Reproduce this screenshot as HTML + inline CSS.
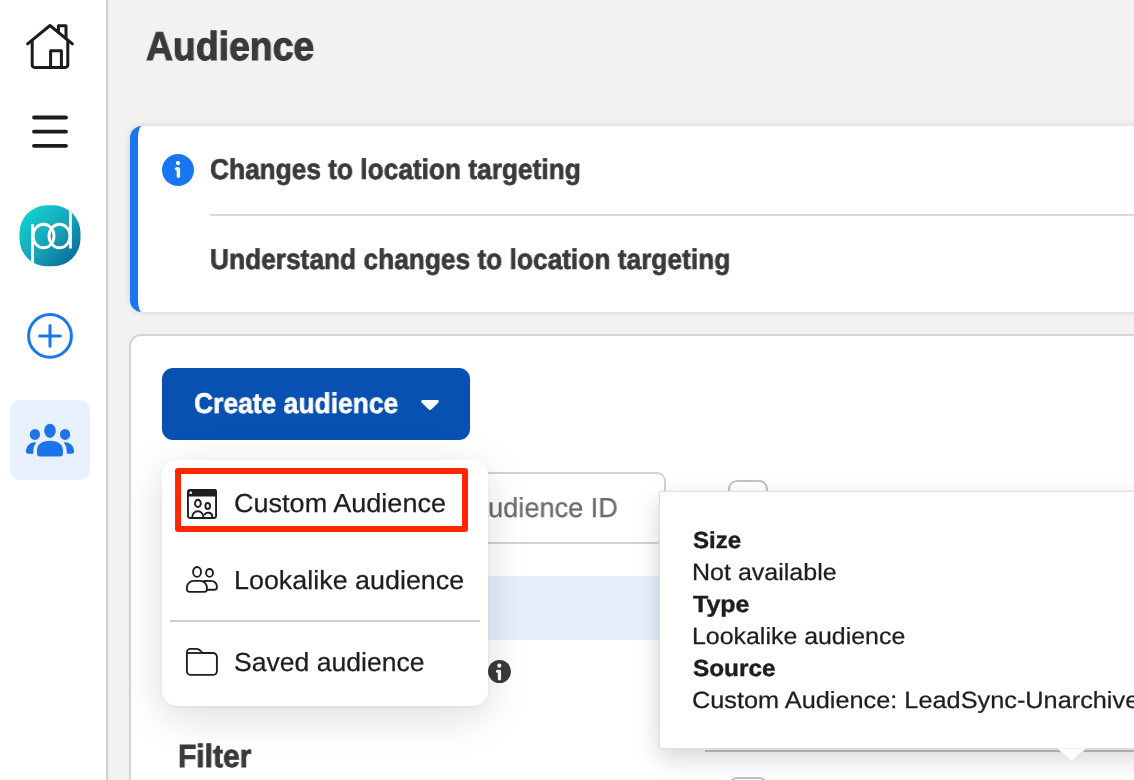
<!DOCTYPE html>
<html lang="en">
<head>
<meta charset="utf-8">
<title>Audience</title>
<style>
html,body{margin:0;padding:0}
body{width:1134px;height:780px;overflow:hidden;position:relative;background:#f2f2f2;font-family:"Liberation Sans",sans-serif}
.abs{position:absolute}
.t{position:absolute;white-space:nowrap;line-height:1;transform-origin:0 0;margin:0;will-change:transform;text-rendering:geometricPrecision}
#sidebar{left:0;top:0;width:106px;height:780px;background:#fff;border-right:2px solid #d2d2d2;box-shadow:1px 0 2px rgba(0,0,0,.04)}
#tile{left:10px;top:400px;width:80px;height:80px;border-radius:10px;background:#e9f1fe}
#alert{left:130px;top:125.5px;width:1100px;height:186.5px;box-sizing:border-box;background:#fff;border-left:8px solid #1876f2;border-radius:12px;box-shadow:0 0 6px rgba(0,0,0,.14)}
#alertline{left:210px;top:214px;width:940px;height:2px;background:#dadada}
#card{left:129px;top:334px;width:1100px;height:600px;box-sizing:border-box;background:#fff;border:2px solid #d4d4d4;border-radius:12px}
#btn{left:162px;top:368px;width:308px;height:72px;border-radius:11px;background:#0950b3}
#search{left:300px;top:472px;width:366px;height:72px;box-sizing:border-box;border:2px solid #d3d3d3;border-radius:9px;background:#fff}
#rowhl{left:200px;top:576px;width:560px;height:63.5px;background:#e8effc}
#tline{left:705px;top:750px;width:500px;height:2px;background:#c6c6c6}
.cb{width:40px;height:40px;box-sizing:border-box;border:2px solid #bec3c9;border-radius:9px;background:#fff}
#menu{left:162px;top:460px;width:326px;height:246px;border-radius:15px;background:#fff;box-shadow:0 10px 44px rgba(0,0,0,.14),0 1px 4px rgba(0,0,0,.06)}
#red{left:174.6px;top:468px;width:293.2px;height:64px;box-sizing:border-box;border:6px solid #ff2600;border-radius:3px}
#mdiv{left:170px;top:620px;width:310px;height:2px;background:#ccd0d5}
#tip{left:659px;top:490.5px;width:600px;height:258.5px;box-sizing:border-box;background:#fff;border:1px solid #e0e0e0;border-radius:3px;box-shadow:0 9px 24px rgba(0,0,0,.17),0 0 2px rgba(0,0,0,.08)}
#tiparrow{left:1054px;top:746px}
#t_title{-webkit-text-stroke:1.1px #3a3a3a;left:145.6px;top:26.8px;font-size:40.26px;font-weight:700;color:#3a3a3a;transform:scaleX(0.9284)}
#t_a1{-webkit-text-stroke:0.7px #3a3a3a;left:210.2px;top:155.8px;font-size:28.63px;font-weight:700;color:#3a3a3a;transform:scaleX(0.9179)}
#t_a2{-webkit-text-stroke:0.7px #3a3a3a;left:210.2px;top:245.8px;font-size:28.63px;font-weight:700;color:#3a3a3a;transform:scaleX(0.9189)}
#t_btn{-webkit-text-stroke:0.6px #ffffff;left:194.4px;top:390.2px;font-size:28.49px;font-weight:700;color:#ffffff;transform:scaleX(0.9280)}
#t_m1{-webkit-text-stroke:0.25px #1c1e21;left:234.1px;top:490.1px;font-size:26.09px;font-weight:400;color:#1c1e21;transform:scaleX(1.0373)}
#t_m2{-webkit-text-stroke:0.25px #1c1e21;left:233.5px;top:567.2px;font-size:26.09px;font-weight:400;color:#1c1e21;transform:scaleX(1.0311)}
#t_m3{-webkit-text-stroke:0.25px #1c1e21;left:234.1px;top:649.0px;font-size:26.09px;font-weight:400;color:#1c1e21;transform:scaleX(1.0189)}
#t_filter{-webkit-text-stroke:0.8px #3a3a3a;left:177.8px;top:739.7px;font-size:32.12px;font-weight:700;color:#3a3a3a;transform:scaleX(0.9337)}
#t_tt1{-webkit-text-stroke:0.4px #1c1e21;left:693.2px;top:528.8px;font-size:23.26px;font-weight:700;color:#1c1e21;transform:scaleX(1.0367)}
#t_tt2{-webkit-text-stroke:0.25px #1c1e21;left:692.1px;top:560.8px;font-size:23.47px;font-weight:400;color:#1c1e21;transform:scaleX(1.0663)}
#t_tt3{-webkit-text-stroke:0.4px #1c1e21;left:693.2px;top:592.9px;font-size:23.26px;font-weight:700;color:#1c1e21;transform:scaleX(1.0759)}
#t_tt4{-webkit-text-stroke:0.25px #1c1e21;left:692.1px;top:624.7px;font-size:23.47px;font-weight:400;color:#1c1e21;transform:scaleX(1.0613)}
#t_tt5{-webkit-text-stroke:0.4px #1c1e21;left:693.2px;top:656.8px;font-size:23.26px;font-weight:700;color:#1c1e21;transform:scaleX(1.0470)}
#t_search{-webkit-text-stroke:0.3px #6b6b6b;left:236.0px;top:494.0px;font-size:27.47px;font-weight:400;color:#6b6b6b;transform:scaleX(0.9885)}
#t_tt6{-webkit-text-stroke:0.25px #1c1e21;left:691.9px;top:688.7px;font-size:23.47px;font-weight:400;color:#1c1e21;transform:scaleX(1.0780)}
</style>
</head>
<body>
<!-- main content -->
<h1 class="t" id="t_title">Audience</h1>

<div class="abs" id="alert"></div>
<svg class="abs" style="left:162px;top:153.900px" width="32" height="32" viewBox="0 0 32 32"><circle cx="16" cy="16" r="16" fill="#1876f2"/><circle cx="16" cy="9.100" r="2.150" fill="#fff"/><path d="M14.400 13.200h2.200a1.500 1.500 0 0 1 1.500 1.500v7.600a1.700 1.700 0 0 1-3.400 0v-6h-.3a1.550 1.550 0 0 1 0-3.100z" fill="#fff"/></svg>
<div class="t" id="t_a1">Changes to location targeting</div>
<div class="abs" id="alertline"></div>
<div class="t" id="t_a2">Understand changes to location targeting</div>

<div class="abs" id="card"></div>
<div class="abs" id="btn"></div>
<div class="t" id="t_btn">Create audience</div>
<svg class="abs" style="left:420px;top:397.500px" width="20" height="14" viewBox="0 0 20 14"><path d="M2.600 2h14.800a1.400 1.400 0 0 1 1 2.400l-6.600 6.600a2.500 2.500 0 0 1-3.600 0l-6.600-6.600a1.400 1.400 0 0 1 1-2.400z" fill="#fff"/></svg>

<div class="abs" id="search"></div>
<div class="t" id="t_search">Search by name or audience ID</div>
<div class="abs" id="rowhl"></div>
<svg class="abs" style="left:487.900px;top:660.200px" width="23" height="23" viewBox="0 0 23 23"><circle cx="11.500" cy="11.500" r="11.500" fill="#3a3a3a"/><circle cx="11.300" cy="5.700" r="2.100" fill="#fff"/><path d="M9.400 9.800h2.200a1.500 1.500 0 0 1 1.500 1.500v7.550a1.650 1.650 0 0 1-3.300 0v-6.050h-.4a1.500 1.500 0 0 1 0-3z" fill="#fff"/></svg>
<div class="abs cb" style="left:728px;top:480px"></div>
<div class="abs cb" style="left:728px;top:777px"></div>
<div class="abs" id="tline"></div>
<div class="t" id="t_filter">Filter</div>

<!-- dropdown menu -->
<div class="abs" id="menu"></div>
<div class="abs" id="red"></div>
<svg class="abs" style="left:185.800px;top:487.900px" width="32" height="32" viewBox="0 0 32 32" fill="none" stroke="#1c1e21" stroke-width="1.900">
<rect x="1.950" y="1.950" width="28.100" height="28.100" rx="2.200"/>
<path d="M1.950 7.550V4.150a2.200 2.200 0 0 1 2.200-2.200h23.700a2.200 2.200 0 0 1 2.200 2.200v3.400z" fill="#1c1e21"/>
<circle cx="4.700" cy="4.700" r="1.300" fill="#fff" stroke="none"/>
<ellipse cx="11.900" cy="15.400" rx="2.900" ry="3.600"/>
<ellipse cx="21.700" cy="18" rx="2.300" ry="3"/>
<path d="M6.300 30v-1.300a5.500 5.500 0 0 1 11 0V30"/>
<path d="M18.400 27.200a4.100 4.100 0 0 1 7.900 1.500V30"/>
</svg>
<div class="t" id="t_m1">Custom Audience</div>
<svg class="abs" style="left:184px;top:564px" width="36" height="32" viewBox="0 0 36 32" fill="none" stroke="#1c1e21" stroke-width="1.850" stroke-linecap="round">
<ellipse cx="13.050" cy="7.900" rx="3.950" ry="4.950"/>
<ellipse cx="25.550" cy="8.900" rx="3.500" ry="3.950"/>
<path d="M20.300 17q3-.2 6.700-.2a5.900 5.700 0 0 1 5.900 5.700v.7a2.500 2.500 0 0 1-2.500 2.500h-7.200"/>
<path d="M2.900 25.300v-1.700a6.700 6.800 0 0 1 6.700-6.800h6.600a6.700 6.800 0 0 1 6.700 6.800v1.700a2.600 2.600 0 0 1-2.600 2.600H5.500a2.600 2.600 0 0 1-2.600-2.600z" fill="#fff"/>
</svg>
<div class="t" id="t_m2">Lookalike audience</div>
<div class="abs" id="mdiv"></div>
<svg class="abs" style="left:184px;top:646px" width="36" height="32" viewBox="0 0 36 32" fill="none" stroke="#1c1e21" stroke-width="1.850" stroke-linejoin="round">
<path d="M2.900 24.900V6.400a3.500 3.500 0 0 1 3.500-3.500h6c2.600 0 4.200 1.600 6.200 4.100h10.300a4 4 0 0 1 4 4v13.900a4 4 0 0 1-4 4H6.900a4 4 0 0 1-4-4z"/>
<path d="M2.900 7h15.700"/>
</svg>
<div class="t" id="t_m3">Saved audience</div>

<!-- tooltip -->
<div class="abs" id="tip"></div>
<svg class="abs" id="tiparrow" width="36" height="20" viewBox="0 0 36 20"><path d="M3.400 2.500h28.600l-14.300 13.400z" fill="#fff"/><path d="M3.400 2.500l14.300 13.400l14.300-13.400" fill="none" stroke="#dedede" stroke-width="1"/></svg>
<div class="t" id="t_tt1">Size</div>
<div class="t" id="t_tt2">Not available</div>
<div class="t" id="t_tt3">Type</div>
<div class="t" id="t_tt4">Lookalike audience</div>
<div class="t" id="t_tt5">Source</div>
<div class="t" id="t_tt6">Custom Audience: LeadSync-Unarchived</div>

<!-- sidebar -->
<div class="abs" id="sidebar"></div>
<svg class="abs" style="left:20px;top:18px" width="60" height="56" viewBox="20 18 60 56" fill="none" stroke="#1c1c1c" stroke-width="3" stroke-linecap="round" stroke-linejoin="round">
<path d="M27.600 43.900L50 25.500l22.400 18.400"/>
<path d="M32.200 40.500v24.600a2.400 2.400 0 0 0 2.400 2.400h30.800a2.400 2.400 0 0 0 2.400-2.400v-24.600"/>
<path d="M58.400 32v-6.200h7.600v12.600"/>
<path d="M50.600 67.500v-16.800h10.800v16.800"/>
</svg>
<svg class="abs" style="left:28px;top:112px" width="44" height="40" viewBox="28 112 44 40" stroke="#1c1c1c" stroke-width="3.800" stroke-linecap="round">
<path d="M34 117.500h32M34 131.700h32M34 145.800h32"/>
</svg>
<svg class="abs" style="left:18px;top:204px" width="64" height="64" viewBox="18 204 64 64">
<defs><linearGradient id="lg" x1="0.1" y1="0.1" x2="0.9" y2="0.9"><stop offset="0" stop-color="#12d0d2"/><stop offset="0.55" stop-color="#15a2b6"/><stop offset="1" stop-color="#0a6c9c"/></linearGradient><clipPath id="cc"><rect x="19.500" y="205.300" width="61" height="61" rx="27.500" ry="27.500"/></clipPath></defs>
<rect x="19.500" y="205.300" width="61" height="61" rx="27.500" ry="27.500" fill="url(#lg)"/>
<g clip-path="url(#cc)" fill="none" stroke="#fff" stroke-width="2.900">
<ellipse cx="43.500" cy="236" rx="10.500" ry="11.800"/>
<ellipse cx="59.500" cy="236" rx="10.500" ry="11.800"/>
<path d="M32.600 224v45M70.400 209v39.500"/>
</g>
</svg>
<svg class="abs" style="left:24px;top:310px" width="52" height="52" viewBox="24 310 52 52" fill="none" stroke="#1876f2" stroke-width="3" stroke-linecap="round">
<circle cx="50" cy="335.900" r="21.400"/>
<path d="M50 325.500v20.800M39.600 335.900h20.800"/>
</svg>
<div class="abs" id="tile"></div>
<svg class="abs" style="left:20px;top:416px" width="60" height="48" viewBox="20 416 60 48" fill="#1b74e8">
<ellipse cx="50" cy="430.800" rx="5.800" ry="7.100"/>
<ellipse cx="34.900" cy="434.400" rx="5.100" ry="5.500"/>
<ellipse cx="65.100" cy="434.400" rx="5.100" ry="5.500"/>
<path d="M37 453.600v-2.600c0-6.600 4.600-10.200 13-10.200s13 3.600 13 10.200v2.600a3 3 0 0 1-3 3h-20a3 3 0 0 1-3-3z"/>
<path d="M36.200 442.300a15.500 15.500 0 0 0-2.900 9.200v2.300h-5a2.400 2.400 0 0 1-2.400-2.400v-.600a9 9 0 0 1 10.300-8.500z"/>
<path d="M63.800 442.300a15.500 15.500 0 0 1 2.900 9.200v2.300h5a2.400 2.400 0 0 0 2.400-2.400v-.600a9 9 0 0 0-10.300-8.500z"/>
</svg>
</body>
</html>
